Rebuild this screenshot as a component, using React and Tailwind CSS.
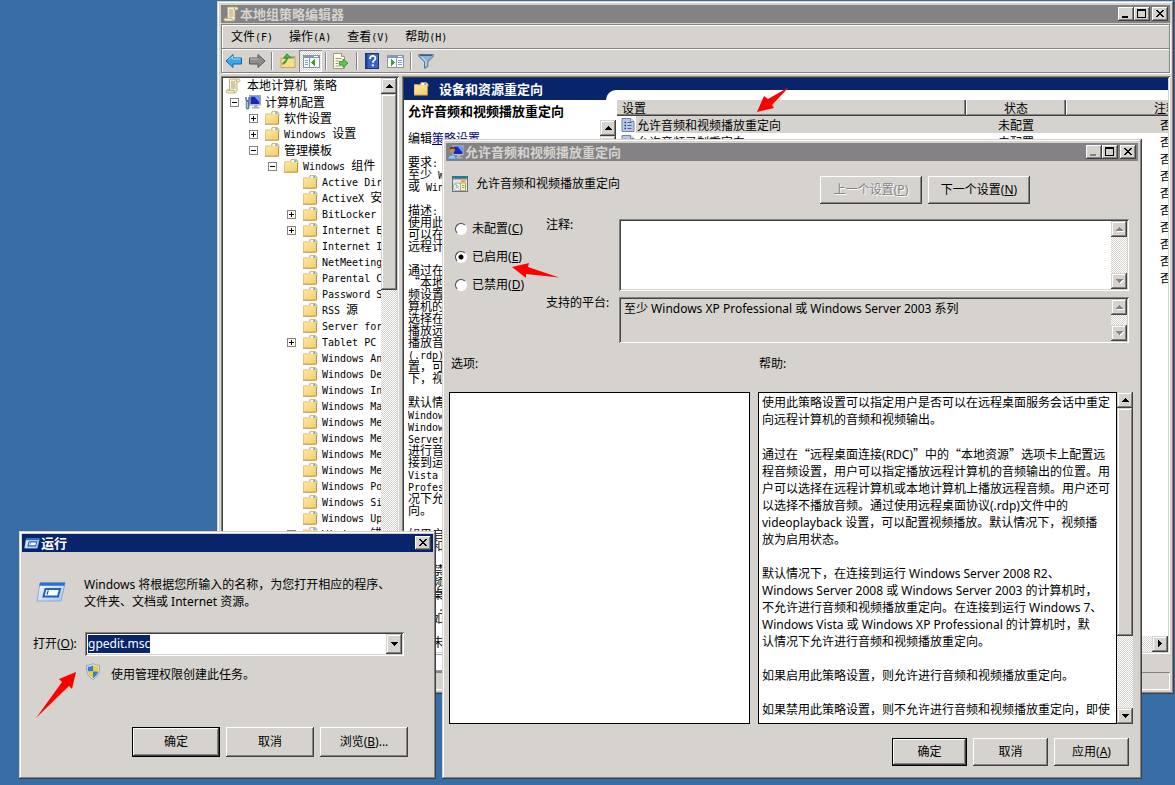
import { Fragment, useEffect, useRef } from "react";

const UI = "font-['Noto_Sans','Noto_Sans_CJK_SC',sans-serif] text-[12px]";
const SONG = "font-['Noto_Sans_CJK_SC',sans-serif] text-[12px]";

const RAISED_WINDOW =
  "bg-[#d6d3ce] shadow-[inset_-1px_-1px_#424142,inset_1px_1px_#d6d3ce,inset_-2px_-2px_#848284,inset_2px_2px_#fff]";
const RAISED_SMALL =
  "bg-[#d6d3ce] shadow-[inset_-1px_-1px_#424142,inset_1px_1px_#fff,inset_-2px_-2px_#848284]";
const SUNKEN =
  "p-[2px] shadow-[inset_1px_1px_#848284,inset_-1px_-1px_#fff,inset_2px_2px_#424142,inset_-2px_-2px_#d6d3ce]";
const DITHER = "bg-[repeating-conic-gradient(#fff_0_25%,#d6d3ce_0_50%)] bg-[length:2px_2px]";

/* ---------- text helper: half-width Latin between full-width characters ---------- */

function Song({ children }) {
  const parts = children.match(/[\x20-\x7e]+|[^\x20-\x7e]+/g) || [];
  return parts.map((part, i) =>
    /^[\x20-\x7e]/.test(part) ? (
      <span key={i} className="whitespace-pre font-['DejaVu_Sans_Mono',monospace] text-[10px]">
        {part}
      </span>
    ) : (
      <Fragment key={i}>{part}</Fragment>
    )
  );
}

/* ---------- icons ---------- */

function FolderIcon() {
  return (
    <svg className="size-4 shrink-0" viewBox="0 0 16 16" aria-hidden="true">
      <defs>
        <linearGradient id="folder" x1="0" y1="0" x2="1" y2="1">
          <stop offset="0" stopColor="#fdeaa8" />
          <stop offset="1" stopColor="#f3cb68" />
        </linearGradient>
      </defs>
      <path d="M7 4l1-2.500h5.500L15 3v3H7z" fill="#f6dc96" stroke="#c9a557" strokeWidth=".7" />
      <rect x="9" y="2.300" width="4.500" height="1.500" fill="#fff" />
      <rect x="11.200" y="2.300" width="2.300" height="1.500" fill="#3f9ee0" />
      <path d="M1 3.500h5.500L8 5h6.500v9H1z" fill="url(#folder)" />
      <path d="M1.500 14V4h4.800" fill="none" stroke="#e3bf6c" strokeWidth=".8" />
      <path d="M14.500 5v9.200H1" fill="none" stroke="#b98d3c" strokeWidth="1" />
    </svg>
  );
}

function ScrollIcon() {
  return (
    <svg className="size-4 shrink-0" viewBox="0 0 16 16" aria-hidden="true">
      <path d="M4.500 1h9c2 0 2 3 0 3H12v8.500c0 1.500-1 2.500-2 2.500H2.500c-2 0-2-3 0-3h2z" fill="#f8f0d4" stroke="#b9a97c" strokeWidth=".9" />
      <path d="M12 1.500c-1 .5-1 2 0 2.500" fill="none" stroke="#a8966a" />
      <path d="M6 4h4M6 6h4.500M6 8h4.500M6 10h4.500" stroke="#a0956e" strokeWidth=".9" />
      <path d="M2.500 12.300h6.700v2.500" fill="none" stroke="#a89b6c" strokeWidth=".8" />
    </svg>
  );
}

function ComputerIcon({ person }) {
  return (
    <svg className="size-4 shrink-0" viewBox="0 0 16 16" aria-hidden="true">
      <rect x="4.500" y="1.500" width="11" height="9.500" fill="#d3d6db" stroke="#9a9ea6" strokeWidth=".9" />
      <rect x="5.500" y="2.500" width="9" height="7.500" fill="#1528b8" />
      <path d="M9.500 2.500h5v6z" fill="#6f9cf5" />
      <path d="M9 11h3.500v2h2v1.500H7V13h2z" fill="#a9adb5" />
      {person ? (
        <>
          <circle cx="4" cy="6" r="2.800" fill="#c98b52" />
          <path d="M1.300 5.500C1.300 2.300 6.500 2 6.500 5L4.500 4.500z" fill="#4d2f16" />
          <path d="M0 15C0 9.500 8 9.500 8 15z" fill="#8cc6f5" stroke="#3d7fc0" strokeWidth=".6" />
        </>
      ) : (
        <>
          <path d="M1 3v3l1.500 1L4 6V3" fill="none" stroke="#4a6f96" strokeWidth="1.400" />
          <rect x="1.200" y="7" width="2.800" height="8" rx="1" fill="#5c8bb8" stroke="#31506f" strokeWidth=".6" />
          <path d="M2.300 8v6" stroke="#cfe4f5" strokeWidth=".8" />
        </>
      )}
    </svg>
  );
}

function ArrowIcon({ forward }) {
  return (
    <svg className={forward ? "h-4 w-[18px] rotate-180" : "h-4 w-[18px]"} viewBox="0 0 18 16" aria-hidden="true">
      <path
        d="M1 8l7-6.500V5h8.500v6H8v3.500z"
        fill={forward ? "#8d8d8d" : "#35a8e8"}
        stroke={forward ? "#555" : "#1c62a8"}
        strokeLinejoin="round"
      />
      <path d={forward ? "M8 10h8" : "M3.500 7L7.500 3.500V6h8"} fill="none" stroke={forward ? "#c4c4c4" : "#9be0fb"} />
    </svg>
  );
}

function UpFolderIcon() {
  return (
    <svg className="size-4" viewBox="0 0 16 16" aria-hidden="true">
      <path d="M1 5.500h5l1-2h8v11H1z" fill="#f9dc8c" stroke="#c39a45" strokeWidth=".8" />
      <rect x="11" y="4" width="3" height="1.500" fill="#4aa3e0" />
      <path d="M3 11.500c0-1.500 1-2 2.200-2.500C6.200 8 6.800 7 7 4.500" fill="none" stroke="#2f9e2f" strokeWidth="2" />
      <path d="M3.500 5L7 .8l4 4.200z" fill="#3fbf3f" stroke="#237a23" strokeWidth=".7" />
    </svg>
  );
}

function PaneIcon({ flip }) {
  return (
    <svg className="h-4 w-[18px]" viewBox="0 0 18 16" aria-hidden="true" shapeRendering="crispEdges">
      <rect x="1" y="2" width="16" height="12" fill="#fff" stroke="#8a95a5" />
      <rect x="1" y="2" width="16" height="3" fill="#8298ba" />
      <rect x="12" y="3" width="4" height="1" fill="#fff" />
      <path d={flip ? "M10.500 5v9" : "M7.500 5v9"} stroke="#8a95a5" />
      <path d={flip ? "M12 7h4M12 9h4M12 11h4" : "M3 7h3M3 9h3M3 11h3"} stroke="#7f9cc4" />
      <path d={flip ? "M5 6l4 3.500L5 13z" : "M13 6L9 9.500 13 13z"} fill="#35a435" />
    </svg>
  );
}

function ExportIcon() {
  return (
    <svg className="h-4 w-[17px]" viewBox="0 0 17 16" aria-hidden="true">
      <path d="M1.500.5h8l3 3v12h-11z" fill="#fffdf0" stroke="#a29a78" />
      <path d="M9.500.5v3h3" fill="#e6e0c2" stroke="#a29a78" />
      <path d="M3.500 5.500h6M3.500 8h4M3.500 10.500h3M3.500 13h6" stroke="#9c9676" />
      <path d="M7.500 8.500H11V6l5 4.200-5 4.300V12H7.500z" fill="#5cc94a" stroke="#2f8a25" strokeWidth=".8" />
    </svg>
  );
}

function HelpIcon() {
  return (
    <svg className="size-4" viewBox="0 0 16 16" aria-hidden="true">
      <rect x="1.500" y=".5" width="13" height="15" fill="#3a63c8" stroke="#1d3577" />
      <rect x="1.500" y="1" width="2" height="14" fill="#20418f" />
      <path d="M6 6c0-4 5.500-4 5.500-.8 0 2.300-2.700 2-2.700 4.600" fill="none" stroke="#fff" strokeWidth="1.800" />
      <rect x="7.800" y="11.300" width="2" height="2" fill="#fff" />
    </svg>
  );
}

function FilterIcon() {
  return (
    <svg className="size-4" viewBox="0 0 16 16" aria-hidden="true">
      <path d="M.8 1.500h14.400v1.800L9.800 9v4.500L6.500 15.300V9L.8 3.300z" fill="#8fb3d6" stroke="#4f7596" />
      <path d="M2 2.500h12" stroke="#35607f" />
      <path d="M4 4l4 4.500V13" fill="none" stroke="#d9ebf8" />
    </svg>
  );
}

function PolicyIcon() {
  return (
    <svg className="h-4 w-[14px] shrink-0" viewBox="0 0 14 16" aria-hidden="true">
      <path d="M1 1.500h8.500l3.500 3v10H1z" fill="#b9c8e6" stroke="#7483a6" />
      <path d="M9.500 1.500v3H13" fill="#eef3ff" stroke="#7483a6" />
      <path d="M3.500 5.500h1.500M3.500 8.500h1.500M3.500 11.500h1.500" stroke="#1c3f6f" strokeWidth="1.500" />
      <path d="M6.500 5.500h4M6.500 8.500h4M6.500 11.500h4" stroke="#4a5f90" />
    </svg>
  );
}

function SettingIcon() {
  return (
    <svg className="size-4 shrink-0" viewBox="0 0 16 16" aria-hidden="true">
      <rect x=".5" y=".5" width="15" height="15" fill="#8fa39c" stroke="#5d7a78" />
      <rect x="0" y="0" width="16" height="2" fill="#1f7f86" />
      <rect x="1" y="2" width="14" height="1.500" fill="#7a6fae" />
      <rect x="1" y="3.500" width="14" height="11.500" fill="#e4e5da" />
      <rect x="9" y="4.300" width="4.500" height="1.800" fill="#f0a020" />
      <circle cx="5.300" cy="10.800" r="4" fill="#f1f3f1" stroke="#909a98" strokeWidth=".7" />
      <path d="M5.300 10.800L2.500 8l2-1z" fill="#9cc79c" />
      <circle cx="5.300" cy="10.800" r="1.100" fill="#fff" stroke="#777" strokeWidth=".6" />
      <rect x="8.500" y="7" width="5" height="7.500" fill="#f8f0c6" stroke="#b39c52" strokeWidth=".8" />
      <path d="M10 9.500h2.500M10 11.500h2.500" stroke="#a08a45" strokeWidth=".9" />
    </svg>
  );
}

function RunIcon({ className }) {
  return (
    <svg className={className} viewBox="0 0 30 20" aria-hidden="true">
      <defs>
        <linearGradient id="run" x1="0" y1="0" x2="1" y2="1">
          <stop offset="0" stopColor="#f4f8fd" />
          <stop offset="1" stopColor="#a9c4ea" />
        </linearGradient>
      </defs>
      <path d="M4 1h25l-4 18H1z" fill="url(#run)" stroke="#7d9fcf" strokeWidth=".8" />
      <path d="M4 .5h25.200l-.8 3.200H3.300z" fill="#2a6fd0" />
      <path d="M9.500 7h14.500l-2 7.500H7.500z" fill="#fff" stroke="#1f5fc4" strokeWidth="2" />
      <path d="M12.300 8.500l-1.300 4" stroke="#1f4fa0" strokeWidth="1.200" />
    </svg>
  );
}

function ShieldIcon() {
  return (
    <svg className="h-[17px] w-4 shrink-0" viewBox="0 0 16 17" aria-hidden="true">
      <path d="M8 .5c2 1.500 4.500 1.800 6.500 1.800.3 6-.5 11-6.500 14.200C2 13.300 1.200 8.300 1.500 2.300 3.500 2.300 6 2 8 .5z" fill="#dfe4e8" stroke="#8a949c" strokeWidth=".8" />
      <path d="M8 2.200V8.500H2.900c-.2-1.500-.2-3-.1-4.700C4.800 3.700 6.500 3.200 8 2.200z" fill="#2f7fd6" />
      <path d="M8 2.200V8.500h5.100c.2-1.500.2-3 .1-4.700C11.200 3.700 9.500 3.200 8 2.200z" fill="#f7ca28" />
      <path d="M8 15V8.500H2.900C3.500 11.500 5 13.500 8 15z" fill="#f7ca28" />
      <path d="M8 15V8.500h5.100C12.500 11.500 11 13.500 8 15z" fill="#2f7fd6" />
    </svg>
  );
}

const GLYPHS = {
  up: "M8 6h1v1h1v1h1v1h1v1H5V9h1V8h1V7h1z",
  down: "M5 6h7v1h-1v1h-1v1H9v1H8V9H7V8H6V7H5z",
  right: "M6 4h1v1h1v1h1v1h1v1H9v1H8v1H7v1H6z",
};

/* ---------- controls ---------- */

function ScrollButton({ dir, label, disabled }) {
  return (
    <button
      type="button"
      aria-label={label}
      disabled={disabled}
      className="size-4 shrink-0 bg-[#d6d3ce] shadow-[inset_-1px_-1px_#424142,inset_1px_1px_#d6d3ce,inset_-2px_-2px_#848284,inset_2px_2px_#fff]"
    >
      <svg className="size-4" viewBox="0 0 16 16" shapeRendering="crispEdges" aria-hidden="true">
        {disabled && <path d={GLYPHS[dir]} fill="#fff" transform="translate(1 1)" />}
        <path d={GLYPHS[dir]} fill={disabled ? "#848284" : "#000"} />
      </svg>
    </button>
  );
}

function VScroll({ thumb, disabled }) {
  return (
    <div className={`flex w-4 shrink-0 flex-col ${DITHER}`}>
      <ScrollButton dir="up" label="向上滚动" disabled={disabled} />
      {thumb && <div className={`${thumb} ${RAISED_WINDOW}`} />}
      <div className="flex-1" />
      <ScrollButton dir="down" label="向下滚动" disabled={disabled} />
    </div>
  );
}

function CaptionButton({ kind, label, dim }) {
  return (
    <button type="button" aria-label={label} className={`h-[14px] w-4 shrink-0 ${RAISED_SMALL}`}>
      <svg className="h-[14px] w-4" viewBox="0 0 16 14" shapeRendering="crispEdges" aria-hidden="true">
        {kind === "min" && <rect x="4" y="9" width="6" height="2" fill={dim ? "#848284" : "#000"} />}
        {kind === "max" && <path d="M3 2h9v9H3zM4 4v6h7V4z" fill="#000" fillRule="evenodd" />}
        {kind === "close" && (
          <path
            d="M4 3h2v1h1v1h2V4h1V3h2v1h-1v1h-1v1H9v1h1v1h1v1h1v1h-2V9H9V8H7v1H6v1H4V9h1V8h1V7h1V6H6V5H5V4H4z"
            fill="#000"
          />
        )}
      </svg>
    </button>
  );
}

function TitleBar({ icon, title, active, closeOnly, dimMin }) {
  return (
    <header
      className={`flex h-[18px] shrink-0 items-center gap-px pl-[2px] pr-[2px] ${
        active ? "bg-[#08246b] text-white" : "bg-[#848284] text-[#d6d3ce]"
      }`}
    >
      {icon}
      <h1 className="flex-1 font-['Noto_Sans_CJK_SC',sans-serif] text-[13px] leading-[18px] font-bold">{title}</h1>
      <div className="flex">
        {!closeOnly && (
          <>
            <CaptionButton kind="min" label="最小化" dim={dimMin} />
            <CaptionButton kind="max" label="最大化" />
          </>
        )}
        <div className="ml-[2px] flex">
          <CaptionButton kind="close" label="关闭" />
        </div>
      </div>
    </header>
  );
}

function PushButton({ children, className, isDefault, disabled }) {
  return (
    <button
      type="button"
      disabled={disabled}
      className={`${className} ${UI} ${
        isDefault
          ? "bg-[#d6d3ce] shadow-[inset_0_0_0_1px_#000,inset_-2px_-2px_#424142,inset_2px_2px_#fff,inset_-3px_-3px_#848284]"
          : RAISED_SMALL
      } ${disabled ? "text-[#848284] [text-shadow:1px_1px_#fff]" : "text-black"}`}
    >
      {children}
    </button>
  );
}

/* ---------- tree ---------- */

const COMPONENTS = [
  ["Active Directory"],
  ["ActiveX 安装程序"],
  ["BitLocker 驱动器", true],
  ["Internet Explorer", true],
  ["Internet Information"],
  ["NetMeeting"],
  ["Parental Controls"],
  ["Password Sync"],
  ["RSS 源"],
  ["Server for NIS"],
  ["Tablet PC", true],
  ["Windows Anytime"],
  ["Windows Defender"],
  ["Windows Installer"],
  ["Windows Mail"],
  ["Windows Media Center"],
  ["Windows Media Digital"],
  ["Windows Media Player"],
  ["Windows Messenger"],
  ["Windows PowerShell"],
  ["Windows SideShow"],
  ["Windows Update"],
  ["Windows 错误报告", true],
].map(([name, more]) => ({ name, state: more ? "+" : "" }));

const TREE = {
  name: "计算机配置",
  state: "-",
  computer: true,
  children: [
    { name: "软件设置", state: "+" },
    { name: "Windows 设置", state: "+" },
    { name: "管理模板", state: "-", children: [{ name: "Windows 组件", state: "-", children: COMPONENTS }] },
  ],
};

function Expander({ state }) {
  if (!state) return <span className="w-[9px] shrink-0" />;
  return (
    <button type="button" aria-label={state === "+" ? "展开" : "折叠"} className="size-[9px] shrink-0">
      <svg className="size-[9px]" viewBox="0 0 9 9" shapeRendering="crispEdges" aria-hidden="true">
        <path d="M0 0h9v9H0zM1 1v7h7V1z" fill="#848284" fillRule="evenodd" />
        <path d={state === "+" ? "M2 4h5v1H2zM4 2h1v5H4z" : "M2 4h5v1H2z"} fill="#000" />
      </svg>
    </button>
  );
}

function TreeNode({ node }) {
  return (
    <li>
      <div className="flex h-4 items-center whitespace-nowrap">
        <Expander state={node.state} />
        <span className="mr-1 ml-[6px] flex">{node.computer ? <ComputerIcon /> : <FolderIcon />}</span>
        <span className="leading-4">
          <Song>{node.name}</Song>
        </span>
      </div>
      {node.children && (
        <ul className="pl-[19px]">
          {node.children.map((child) => (
            <TreeNode key={child.name} node={child} />
          ))}
        </ul>
      )}
    </li>
  );
}

/* ---------- policy editor ---------- */

const DESCRIPTION = [
  "要求:",
  "至少 Windows XP Professional",
  "或 Windows Server 2003 系列",
  "",
  "描述:",
  "使用此策略设置可以指定用户是否",
  "可以在远程桌面服务会话中重定向",
  "远程计算机的音频和视频输出。",
  "",
  "通过在“远程桌面连接(RDC)”中的",
  "“本地资源”选项卡上配置远程音",
  "频设置，用户可以指定播放远程计",
  "算机的音频输出的位置。用户可以",
  "选择在远程计算机或本地计算机上",
  "播放远程音频。用户还可以选择不",
  "播放音频。通过使用远程桌面协议",
  "(.rdp)文件中的 videoplayback 设",
  "置，可以配置视频播放。默认情况",
  "下，视频播放为启用状态。",
  "",
  "默认情况下，在连接到运行",
  "Windows Server 2008 R2、",
  "Windows Server 2008 或 Windows",
  "Server 2003 的计算机时，不允许",
  "进行音频和视频播放重定向。在连",
  "接到运行 Windows 7、Windows",
  "Vista 或 Windows XP",
  "Professional 的计算机时，默认情",
  "况下允许进行音频和视频播放重定",
  "向。",
  "",
  "如果启用此策略设置，则允许进行",
  "音频和视频播放重定向。",
  "",
  "如果禁用此策略设置，则不允许进",
  "行音频和视频播放重定向，即使在",
  "远程桌面连接中指定了音频重定向",
  "或在 .rdp 文件中指定了视频播放",
  "也是如此。",
  "",
  "如果未配置此策略设置，则不会在",
];

const POLICIES = [
  "允许音频和视频播放重定向",
  "允许音频录制重定向",
  "限制音频播放质量",
  "不允许剪贴板重定向",
  "不允许 COM 端口重定向",
  "不允许驱动器重定向",
  "不允许 LPT 端口重定向",
  "不允许受支持的即插即用设备重定向",
  "不允许智能卡设备重定向",
  "允许时区重定向",
];

function ToolSeparator() {
  return (
    <span className="mr-[2px] ml-[3px] flex">
      <span className="h-[18px] w-[2px] border-l border-[#848284] bg-white" />
    </span>
  );
}

function ToolButton({ label, children, pressed }) {
  return (
    <button
      type="button"
      aria-label={label}
      className={`flex h-[22px] w-[23px] items-center justify-center ${
        pressed ? `${DITHER} shadow-[inset_1px_1px_#848284,inset_-1px_-1px_#fff]` : ""
      }`}
    >
      {children}
    </button>
  );
}

function PolicyEditor() {
  return (
    <section className={`absolute top-px right-px left-[217px] flex h-[693px] flex-col p-1 ${RAISED_WINDOW} ${SONG}`}>
      <TitleBar icon={<ScrollIcon />} title="本地组策略编辑器" />

      <div className="mt-px shrink-0 border border-[#848284] shadow-[inset_1px_1px_#fff,1px_1px_#fff]">
        <nav className="flex h-6 items-center border-b border-[#848284] pt-px pl-px">
          {["文件(F)", "操作(A)", "查看(V)", "帮助(H)"].map((item) => (
            <button key={item} type="button" className="px-2 leading-4">
              <Song>{item}</Song>
            </button>
          ))}
        </nav>
        <div className="flex h-[23px] items-center border-t border-white">
          <ToolButton label="后退">
            <ArrowIcon />
          </ToolButton>
          <ToolButton label="前进">
            <ArrowIcon forward />
          </ToolButton>
          <ToolSeparator />
          <span className="ml-px flex">
            <ToolButton label="上一级">
              <UpFolderIcon />
            </ToolButton>
          </span>
          <ToolButton label="显示树" pressed>
            <PaneIcon />
          </ToolButton>
          <ToolSeparator />
          <ToolButton label="导出列表">
            <ExportIcon />
          </ToolButton>
          <span className="ml-px flex">
            <ToolSeparator />
          </span>
          <ToolButton label="帮助">
            <HelpIcon />
          </ToolButton>
          <ToolButton label="显示操作窗格">
            <PaneIcon flip />
          </ToolButton>
          <span className="ml-px flex">
            <ToolSeparator />
          </span>
          <ToolButton label="筛选">
            <FilterIcon />
          </ToolButton>
        </div>
      </div>

      <div className="mt-[3px] flex min-h-0 flex-1 gap-[3px]">
        <div className={`flex w-[178px] shrink-0 ${SUNKEN}`}>
          <div className="min-w-0 flex-1 overflow-hidden bg-white">
            <div className="flex h-4 items-center gap-[6px] pl-[2px]">
              <ScrollIcon />
              <span className="leading-4">
                <Song>本地计算机 策略</Song>
              </span>
            </div>
            <ul className="pl-[7px]">
              <TreeNode node={TREE} />
            </ul>
          </div>
          <VScroll thumb="h-[196px]" />
        </div>

        <div className={`flex min-w-0 flex-1 flex-col ${SUNKEN}`}>
          <div className="flex h-[22px] shrink-0 bg-[#08246b]">
            <div className="flex w-[202px] shrink-0 items-center gap-[10px] pl-[9px] text-white">
              <FolderIcon />
              <h2 className="text-[13px] leading-4 font-bold">设备和资源重定向</h2>
            </div>
            <div className="h-[10px] flex-1 self-end rounded-tl-[10px] bg-white" />
          </div>

          <div className="flex min-h-0 flex-1 bg-white">
            <div className="flex w-[212px] shrink-0 flex-col">
              <h3 className="h-5 shrink-0 pl-1 text-[13px] leading-[22px] font-bold">允许音频和视频播放重定向</h3>
              <div className="flex min-h-0 flex-1">
                <div className="min-w-0 flex-1 overflow-hidden pt-3 pl-1 leading-3 whitespace-nowrap">
                  <p>
                    编辑
                    <a href="#setting" className="text-[#000080] underline">
                      策略设置
                    </a>
                  </p>
                  <div className="mt-3">
                    {DESCRIPTION.map((line, i) => (
                      <p key={i} className="h-3">
                        <Song>{line}</Song>
                      </p>
                    ))}
                  </div>
                </div>
                <VScroll thumb="h-[300px]" />
              </div>
            </div>

            <div className="flex min-w-0 flex-1 flex-col">
              <div className="min-h-0 flex-1 overflow-hidden pl-px">
                <table className="w-[649px] table-fixed border-collapse">
                  <thead>
                    <tr className="h-4 bg-[#d6d3ce]">
                      <th className="w-[349px] p-0 text-left font-normal leading-4 shadow-[inset_-1px_-1px_#424142,inset_-2px_-2px_#848284]">
                        <span className="pl-[5px]">设置</span>
                      </th>
                      <th className="w-[100px] p-0 font-normal leading-4 shadow-[inset_-1px_-1px_#424142,inset_1px_0_#fff,inset_-2px_-2px_#848284]">
                        状态
                      </th>
                      <th className="w-[200px] p-0 font-normal leading-4 shadow-[inset_-1px_-1px_#424142,inset_1px_0_#fff,inset_-2px_-2px_#848284]">
                        注释
                      </th>
                    </tr>
                  </thead>
                  <tbody>
                    {POLICIES.map((name, i) => {
                      const fill = i === 0 ? "bg-[#d6d3ce]" : "";
                      return (
                        <tr key={name} className="h-[17px]">
                          <td className="p-0">
                            <div className="flex h-[17px] items-center pl-1">
                              <PolicyIcon />
                              <span className={`ml-px flex-1 pl-px leading-[17px] ${fill}`}>
                                <Song>{name}</Song>
                              </span>
                            </div>
                          </td>
                          <td className={`p-0 text-center leading-[17px] ${fill}`}>未配置</td>
                          <td className={`p-0 text-center leading-[17px] ${fill}`}>否</td>
                        </tr>
                      );
                    })}
                  </tbody>
                </table>
              </div>
              <div className={`flex h-4 justify-end ${DITHER}`}>
                <ScrollButton dir="right" label="向右滚动" />
              </div>
            </div>
          </div>
        </div>
      </div>

      <div className="flex h-[18px] shrink-0 justify-start pl-[183px]">
        <svg className="h-[18px] w-[120px]" viewBox="0 0 120 18" aria-hidden="true">
          <path d="M0 0h48L38 17H8z" fill="#fff" stroke="#424142" />
        </svg>
      </div>
      <div className="flex h-[18px] shrink-0 gap-[2px]">
        <div className="flex-1 shadow-[inset_1px_1px_#848284,inset_-1px_-1px_#fff]" />
        <div className="w-[180px] shadow-[inset_1px_1px_#848284,inset_-1px_-1px_#fff]" />
      </div>
    </section>
  );
}

/* ---------- setting dialog ---------- */

function Q({ children }) {
  return <span className="font-['Noto_Sans_CJK_SC',sans-serif]">{children}</span>;
}

const HELP = [
  ["使用此策略设置可以指定用户是否可以在远程桌面服务会话中重定", "向远程计算机的音频和视频输出。"],
  [
    <>
      通过在<Q>“</Q>远程桌面连接(RDC)<Q>”</Q>中的<Q>“</Q>本地资源<Q>”</Q>选项卡上配置远
    </>,
    "程音频设置，用户可以指定播放远程计算机的音频输出的位置。用",
    "户可以选择在远程计算机或本地计算机上播放远程音频。用户还可",
    "以选择不播放音频。通过使用远程桌面协议(.rdp)文件中的",
    "videoplayback 设置，可以配置视频播放。默认情况下，视频播",
    "放为启用状态。",
  ],
  [
    "默认情况下，在连接到运行 Windows Server 2008 R2、",
    "Windows Server 2008 或 Windows Server 2003 的计算机时，",
    "不允许进行音频和视频播放重定向。在连接到运行 Windows 7、",
    "Windows Vista 或 Windows XP Professional 的计算机时，默",
    "认情况下允许进行音频和视频播放重定向。",
  ],
  ["如果启用此策略设置，则允许进行音频和视频播放重定向。"],
  ["如果禁用此策略设置，则不允许进行音频和视频播放重定向，即使"],
];

function SettingDialog() {
  const options = [
    ["未配置", "C"],
    ["已启用", "E"],
    ["已禁用", "D"],
  ];
  return (
    <section className={`absolute top-[139px] left-[442px] right-[33px] flex h-[640px] flex-col p-1 ${RAISED_WINDOW} ${UI}`}>
      <TitleBar icon={<ComputerIcon person />} title="允许音频和视频播放重定向" dimMin />

      <div className="mt-[15px] flex h-7 shrink-0 gap-[6px] pr-[108px] pl-[6px]">
        <div className="flex h-4 flex-1 items-center gap-2">
          <SettingIcon />
          <h2 className="leading-4">允许音频和视频播放重定向</h2>
        </div>
        <PushButton className="h-7 w-[102px]" disabled>
          上一个设置(<u>P</u>)
        </PushButton>
        <PushButton className="h-7 w-[102px]">
          下一个设置(<u>N</u>)
        </PushButton>
      </div>

      <div className="mt-[11px] flex shrink-0 pr-[9px] pl-[9px]">
        <fieldset className="w-[91px] shrink-0">
          {options.map(([name, key], i) => (
            <label key={key} className="flex h-7 items-center gap-[5px] whitespace-nowrap">
              <input
                type="radio"
                name="state"
                defaultChecked={i === 1}
                className="size-3 appearance-none rounded-full border border-t-[#424142] border-r-white border-b-white border-l-[#424142] bg-white checked:bg-[radial-gradient(circle,#000_0_2px,#fff_3px)]"
              />
              <span>
                {name}(<u>{key}</u>)
              </span>
            </label>
          ))}
        </fieldset>
        <div className="grid flex-1 grid-cols-[73px_1fr] gap-y-[6px] pt-1">
          <label htmlFor="comment" className="leading-3">
            注释:
          </label>
          <div className={`flex h-[72px] bg-white ${SUNKEN}`}>
            <textarea id="comment" className="flex-1 resize-none overflow-hidden bg-white px-[3px] outline-none" />
            <VScroll disabled />
          </div>
          <label htmlFor="platform" className="leading-3">
            支持的平台:
          </label>
          <div className={`flex h-[46px] ${SUNKEN}`}>
            <textarea
              id="platform"
              readOnly
              defaultValue="至少 Windows XP Professional 或 Windows Server 2003 系列"
              className="flex-1 resize-none overflow-hidden bg-[#d6d3ce] px-[3px] pt-[2px] leading-4 outline-none"
            />
            <VScroll disabled />
          </div>
        </div>
      </div>

      <div className="mt-[13px] grid min-h-0 flex-1 grid-cols-[301fr_375fr] grid-rows-[36px_1fr] gap-x-2 pr-[5px] pl-[3px]">
        <h3 className="pl-[2px] leading-4">选项:</h3>
        <h3 className="pl-px leading-4">帮助:</h3>
        <div className="border border-black bg-white" />
        <div className="flex min-h-0">
          <div className="min-w-0 flex-1 overflow-hidden border border-black bg-white pt-px pl-[3px] leading-[17px] whitespace-nowrap">
            {HELP.map((lines, i) => (
              <p key={i} className="mb-[17px]">
                {lines.map((line, j) => (
                  <span key={j} className="block">
                    {line}
                  </span>
                ))}
              </p>
            ))}
          </div>
          <VScroll thumb="h-[228px]" />
        </div>
      </div>

      <div className="mt-[14px] mb-[9px] flex shrink-0 justify-end gap-[6px] pr-[9px]">
        <PushButton className="h-7 w-[75px]" isDefault>
          确定
        </PushButton>
        <PushButton className="h-7 w-[75px]">取消</PushButton>
        <PushButton className="h-7 w-[75px]">
          应用(<u>A</u>)
        </PushButton>
      </div>
    </section>
  );
}

/* ---------- run dialog ---------- */

function RunDialog() {
  const field = useRef(null);
  useEffect(() => {
    field.current.focus();
    field.current.select();
  }, []);
  return (
    <section className={`absolute top-[531px] left-[19px] flex h-[248px] w-[417px] flex-col p-[3px] ${RAISED_WINDOW} ${UI}`}>
      <TitleBar icon={<RunIcon className="h-[11px] w-4" />} title="运行" active closeOnly />

      <div className="mt-6 flex gap-[18px] pl-[14px]">
        <RunIcon className="mt-[6px] h-5 w-[30px]" />
        <p className="leading-[17px]">
          Windows 将根据您所输入的名称，为您打开相应的程序、
          <br />
          文件夹、文档或 Internet 资源。
        </p>
      </div>

      <div className="mt-[22px] flex items-center pr-[29px] pl-[11px]">
        <label htmlFor="open" className="w-[52px] shrink-0">
          打开(<u>O</u>):
        </label>
        <div className={`flex h-6 flex-1 bg-white ${SUNKEN}`}>
          <input
            id="open"
            ref={field}
            defaultValue="gpedit.msc"
            className="min-w-0 flex-1 bg-white px-px outline-none selection:bg-[#08246b] selection:text-white"
          />
          <button type="button" aria-label="下拉列表" className={`h-5 w-4 ${RAISED_WINDOW}`}>
            <svg className="h-5 w-4" viewBox="0 -2 16 20" shapeRendering="crispEdges" aria-hidden="true">
              <path d={GLYPHS.down} fill="#000" />
            </svg>
          </button>
        </div>
      </div>

      <div className="mt-[7px] flex gap-[10px] pl-[63px]">
        <ShieldIcon />
        <p className="pt-1 leading-4">使用管理权限创建此任务。</p>
      </div>

      <div className="mt-auto flex justify-end gap-[6px] pr-[25px] pb-[19px]">
        <PushButton className="h-[30px] w-[88px]" isDefault>
          确定
        </PushButton>
        <PushButton className="h-[30px] w-[88px]">取消</PushButton>
        <PushButton className="h-[30px] w-[88px]">
          浏览(<u>B</u>)...
        </PushButton>
      </div>
    </section>
  );
}

function RedArrow({ className, viewBox, points }) {
  return (
    <svg className={`pointer-events-none absolute ${className}`} viewBox={viewBox} aria-hidden="true">
      <polygon points={points} fill="#ff0000" />
    </svg>
  );
}

export default function App() {
  return (
    <main className="relative h-screen min-h-[785px] overflow-hidden bg-[#396da5] text-black">
      <PolicyEditor />
      <SettingDialog />
      <RunDialog />
      <RedArrow
        className="top-[86px] left-[756px] h-7 w-[34px]"
        viewBox="0 0 34 28"
        points="1,26 8,10 12,13 33,1 16,19 18,22"
      />
      <RedArrow
        className="top-[262px] left-[511px] h-[17px] w-[49px]"
        viewBox="0 0 49 17"
        points="1,5 18,1 17,5 48,15.500 15,12 15,16"
      />
      <RedArrow
        className="top-[671px] left-[35px] h-12 w-[42px]"
        viewBox="0 0 42 48"
        points="41,1 24,8 27,11 1,47 34,15 37,18"
      />
    </main>
  );
}
